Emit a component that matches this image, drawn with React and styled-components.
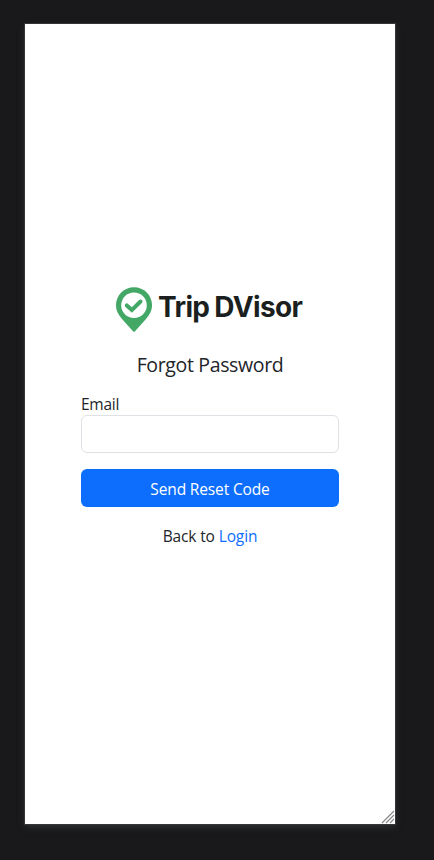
import React from "react";
import styled, { createGlobalStyle } from "styled-components";

const GlobalStyle = createGlobalStyle`
  * { box-sizing: border-box; }
  html, body { margin: 0; background: #19191b; }
  body { overflow: hidden; }
`;

const Backdrop = styled.div`
  height: 860px;
  padding: 24px 39px 36px 25px;
  background: #19191b;
  font-family: "Open Sans", "Noto Sans", sans-serif;
  font-size: 16px;
  line-height: 24px;
  color: #212529;
`;

const Viewport = styled.main`
  position: relative;
  width: 370px;
  height: 800px;
  padding: 263px 56px 0;
  background: #fff;
  box-shadow: 0 0 0 1px #343538, 0 3px 7px #303235;
`;

const ResizeGrip = styled.svg`
  position: absolute;
  right: 0;
  bottom: 0;
`;

const Form = styled.form`
  display: flex;
  flex-direction: column;
`;

const Brand = styled.div`
  display: flex;
  height: 46px;
  padding-left: 35px;
  gap: 5px;
`;

const BrandName = styled.span`
  font: 650 28px/40px Inter, sans-serif;
  letter-spacing: ${(p) => p.$tracking}px;
  word-spacing: -1px;
  white-space: nowrap;
  color: #1b1f20;
`;

const Text = styled.span`
  letter-spacing: ${(p) => p.$tracking || 0}px;
  white-space: nowrap;
`;

const Title = styled.h1`
  margin: 20px 0 15px;
  font-size: 19.5px;
  font-weight: 400;
  line-height: 24px;
  text-align: center;
`;

const Label = styled.label`
  height: 23px;
  font-size: 15.5px;
  line-height: 24px;
`;

const Input = styled.input`
  height: 38px;
  padding: 6px 12px;
  border: 1px solid #dee2e6;
  border-radius: 6px;
  background: #fff;
  font: inherit;
`;

const Button = styled.button`
  height: 38px;
  margin-top: 16px;
  padding: 2px 0 0;
  border: 0;
  border-radius: 6px;
  background: #0d6efd;
  color: #fff;
  font: inherit;
  font-size: 15.5px;
`;

const Footer = styled.p`
  margin: 17px 0 0;
  font-size: 15.5px;
  text-align: center;
`;

const Link = styled.a`
  color: #0d6efd;
  text-decoration: none;
`;

function PinLogo() {
  return (
    <svg width="37" height="46" viewBox="0 0 37 46" aria-hidden="true">
      <path d="M18 .2C8 .2 0 8.200 0 18C0 23.500 2.300 27.500 6 32L17 44.300Q18 45.300 19 44.300L30 32C33.700 27.500 36 23.500 36 18C36 8.200 28 .2 18 .2Z" fill="#43a766" />
      <circle cx="18" cy="18.300" r="12.800" fill="#fff" />
      <path d="M10.800 18.400L15.900 23L24.500 14.500" fill="none" stroke="#43a766" strokeWidth="4" strokeLinecap="round" />
    </svg>
  );
}

export default function App() {
  return (
    <>
      <GlobalStyle />
      <Backdrop>
        <Viewport>
          <Form onSubmit={(e) => e.preventDefault()}>
            <Brand>
              <PinLogo />
              <BrandName $tracking={-0.65}>Trip DVisor</BrandName>
            </Brand>
            <Title><Text $tracking={-0.35}>Forgot Password</Text></Title>
            <Label htmlFor="email"><Text $tracking={-0.25}>Email</Text></Label>
            <Input id="email" type="email" />
            <Button type="submit"><Text $tracking={-0.14}>Send Reset Code</Text></Button>
            <Footer>
              <Text $tracking={-0.13}>Back to <Link href="#login">Login</Link></Text>
            </Footer>
          </Form>
          <ResizeGrip width="15" height="15" viewBox="0 0 15 15" aria-hidden="true">
            <path d="M2 14L14 2M6 14L14 6M10 14L14 10" stroke="#858585" strokeWidth="1.100" />
          </ResizeGrip>
        </Viewport>
      </Backdrop>
    </>
  );
}
